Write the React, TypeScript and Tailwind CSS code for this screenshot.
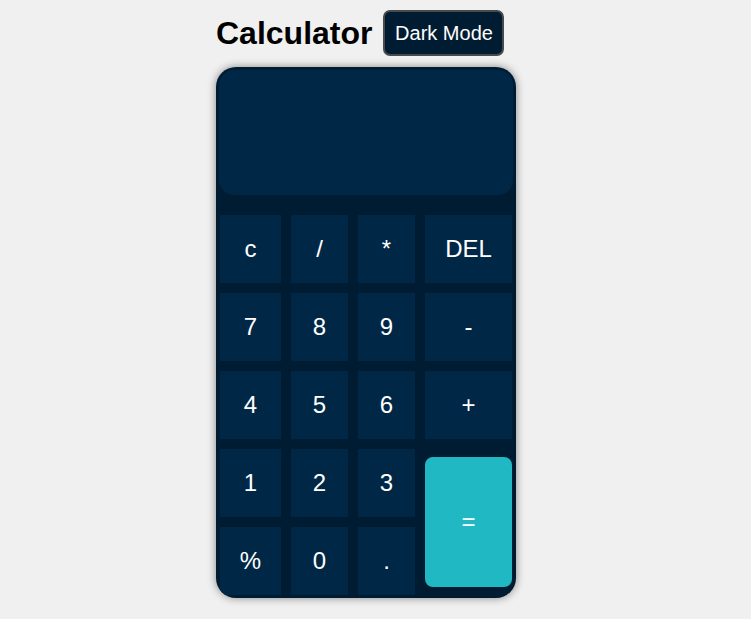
import React from "react";

const keys: { label: string; cls?: string }[] = [
  { label: "c" }, { label: "/" }, { label: "*" }, { label: "DEL" },
  { label: "7" }, { label: "8" }, { label: "9" }, { label: "-" },
  { label: "4" }, { label: "5" }, { label: "6" }, { label: "+" },
];

export default function App() {
  return (
    <div className="min-h-[619px] w-full bg-[#f0f0f0] pl-[216px] pt-[10px]" style={{ fontFamily: '"Liberation Sans", Arial, sans-serif' }}>
      <div className="flex items-center gap-[11px] h-[46px]">
        <h1 className="text-[32px] font-bold text-black leading-none">Calculator</h1>
        <button className="h-[46px] w-[121px] rounded-[7px] border-2 border-[#4a4a4a] bg-[#001c32] text-white text-[20px] leading-none">
          Dark Mode
        </button>
      </div>
      <div className="mt-[11px] w-[300px] h-[531px] rounded-[20px] overflow-hidden bg-[#001c32] p-[3px] shadow-[0_0_8px_rgba(0,0,0,0.45)] flex flex-col">
        <div className="h-[125px] w-full rounded-[15px] bg-[#002846]" />
        <div className="mt-[20px] px-px grid grid-cols-[61px_57px_57px_87px] grid-rows-[68px_68px_68px_68px_68px] gap-[10px] text-white text-[24px]">
          {keys.map((k) => (
            <button key={k.label} className="bg-[#002846] flex items-center justify-center">
              {k.label}
            </button>
          ))}
          <button className="bg-[#002846] flex items-center justify-center">1</button>
          <button className="bg-[#002846] flex items-center justify-center">2</button>
          <button className="bg-[#002846] flex items-center justify-center">3</button>
          <button className="row-span-2 my-[8px] rounded-[8px] bg-[#20b9c3] flex items-center justify-center">=</button>
          <button className="bg-[#002846] flex items-center justify-center">%</button>
          <button className="bg-[#002846] flex items-center justify-center">0</button>
          <button className="bg-[#002846] flex items-center justify-center">.</button>
        </div>
      </div>
    </div>
  );
}
